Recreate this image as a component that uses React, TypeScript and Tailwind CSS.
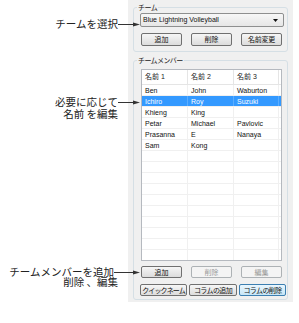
import React from "react";

const members = [
  ["Ben", "John", "Waburton"],
  ["Ichiro", "Roy", "Suzuki"],
  ["Khieng", "King", ""],
  ["Petar", "Michael", "Pavlovic"],
  ["Prasanna", "E", "Nanaya"],
  ["Sam", "Kong", ""],
];

const Arrow = ({ width }: { width: number }) => (
  <svg width={width} height="7" viewBox={`0 0 ${width} 7`} className="-mr-[12px] shrink-0">
    <line x1="0" y1="3.5" x2={width - 5} y2="3.5" stroke="#333" strokeWidth="1" />
    <polygon points={`${width - 7},1.5 ${width},3.5 ${width - 7},5.5`} fill="#333" />
  </svg>
);

function Btn({
  label,
  disabled,
  focused,
  className = "",
}: {
  label: string;
  disabled?: boolean;
  focused?: boolean;
  className?: string;
}) {
  let tone = "border-[#707070] bg-linear-to-b from-[#f6f6f6] to-[#dcdcdc] text-[#111]";
  if (disabled) tone = "border-[#adb2b5] bg-[#f4f4f4] text-[#9a9a9a]";
  if (focused) tone = "border-[#3c7fb1] bg-linear-to-b from-[#eaf6fd] to-[#c6e6f7] text-[#111]";
  return (
    <div
      className={`flex items-center justify-center overflow-hidden whitespace-nowrap rounded-[2px] border text-[7px] leading-none ${tone} ${className}`}
    >
      {label}
    </div>
  );
}

export default function App() {
  const rows = [...members, ...Array.from({ length: 10 }, () => ["", "", ""])];

  return (
    <div className="flex h-[323px] w-[299px] bg-white font-['Liberation_Sans','Noto_Sans_CJK_JP',sans-serif]">
      {/* callouts */}
      <div className="relative z-10 flex w-[128px] shrink-0 flex-col font-['Noto_Sans_CJK_JP',sans-serif] text-[10.5px] text-[#222]">
        <div className="mt-[18px] flex h-[12px] items-center justify-end leading-[12px]">
          <span>チームを選択</span>
          <Arrow width={22} />
        </div>

        <div className="mt-[66px] flex h-[12px] items-center justify-end leading-[12px]">
          <span>必要に応じて</span>
          <Arrow width={22} />
        </div>
        <div className="flex h-[12px] items-center justify-end pr-[10px] leading-[12px]">名前 を編集</div>

        <div className="mt-[147px] flex h-[10px] items-center justify-end leading-[10px]">
          <span>チームメンバーを追加</span>
          <Arrow width={26} />
        </div>
        <div className="flex h-[10px] items-center justify-end pr-[10px] leading-[10px]">削除 、編集</div>
      </div>

      {/* panel */}
      <div className="h-[302px] w-[165px] shrink-0 bg-[#f0f0f0] px-[5px] pt-[7px]">
        {/* team group */}
        <div className="relative h-[45px] rounded-[3px] border border-[#d5dfe5] pl-[6px] pr-[3px] pt-[5px]">
          <span className="absolute -top-[5px] left-[3px] bg-[#f0f0f0] px-[1px] text-[7px] leading-[9px] tracking-[-0.5px] text-[#222]">
            チーム
          </span>
          <div className="flex h-[14px] w-[144px] items-center justify-between rounded-[2px] border border-[#8e8f8f] bg-linear-to-b from-[#f7f7f7] to-[#e6e6e6] pl-[2px] pr-[5px] text-[7px] text-[#111]">
            <span>Blue Lightning Volleyball</span>
            <svg width="5" height="3" viewBox="0 0 5 3">
              <polygon points="0,0 5,0 2.5,3" fill="#111" />
            </svg>
          </div>
          <div className="mt-[6px] flex w-[142px] justify-between pl-[1px]">
            <Btn label="追加" className="h-[13px] w-[41px]" />
            <Btn label="削除" className="h-[13px] w-[41px]" />
            <Btn label="名前変更" className="h-[13px] w-[41px] tracking-[-0.3px]" />
          </div>
        </div>

        {/* members group */}
        <div className="relative mt-[8px] h-[240px] rounded-[3px] border border-[#d5dfe5] pl-[7px] pt-[8px]">
          <span className="absolute -top-[5px] left-[3px] bg-[#f0f0f0] px-[1px] text-[7px] leading-[9px] tracking-[-0.6px] text-[#222]">
            チームメンバー
          </span>

          <div className="h-[192px] w-[141px] overflow-hidden border border-[#b5b9bf] bg-white">
            <div className="grid h-[15px] grid-cols-[46px_46px_45px_1fr] border-b border-[#e5e5e5] text-[7px] text-[#222]">
              {["名前 1", "名前 2", "名前 3", ""].map((h, i) => (
                <div key={i} className="flex items-center border-r border-[#e5e5e5] pl-[3px] last:border-r-0">
                  {h}
                </div>
              ))}
            </div>
            {rows.map((r, i) => {
              const sel = i === 1;
              return (
                <div
                  key={i}
                  className={`grid h-[11px] grid-cols-[46px_46px_45px_1fr] border-b border-[#f0f0f0] text-[7px] leading-none ${
                    sel ? "bg-[#3399ff] text-white" : "text-[#111]"
                  }`}
                >
                  {[...r, ""].map((c, j) => (
                    <div
                      key={j}
                      className={`flex items-center pl-[3px] ${j < 3 ? "border-r" : ""} ${
                        sel ? "border-[#5aadff]" : "border-[#f0f0f0]"
                      }`}
                    >
                      {c}
                    </div>
                  ))}
                </div>
              );
            })}
          </div>

          <div className="mt-[5px] flex w-[141px] justify-between">
            <Btn label="追加" className="h-[12px] w-[41px]" />
            <Btn label="削除" disabled className="h-[12px] w-[41px]" />
            <Btn label="編集" disabled className="h-[12px] w-[41px]" />
          </div>
          <div className="mt-[6px] -ml-[1px] flex w-[146px] justify-between">
            <Btn label="クイックネーム" className="h-[12px] w-[47px] tracking-[-0.9px]" />
            <Btn label="コラムの追加" className="h-[12px] w-[48px] tracking-[-0.6px]" />
            <Btn label="コラムの削除" focused className="h-[12px] w-[47px] tracking-[-0.6px]" />
          </div>
        </div>
      </div>
    </div>
  );
}
